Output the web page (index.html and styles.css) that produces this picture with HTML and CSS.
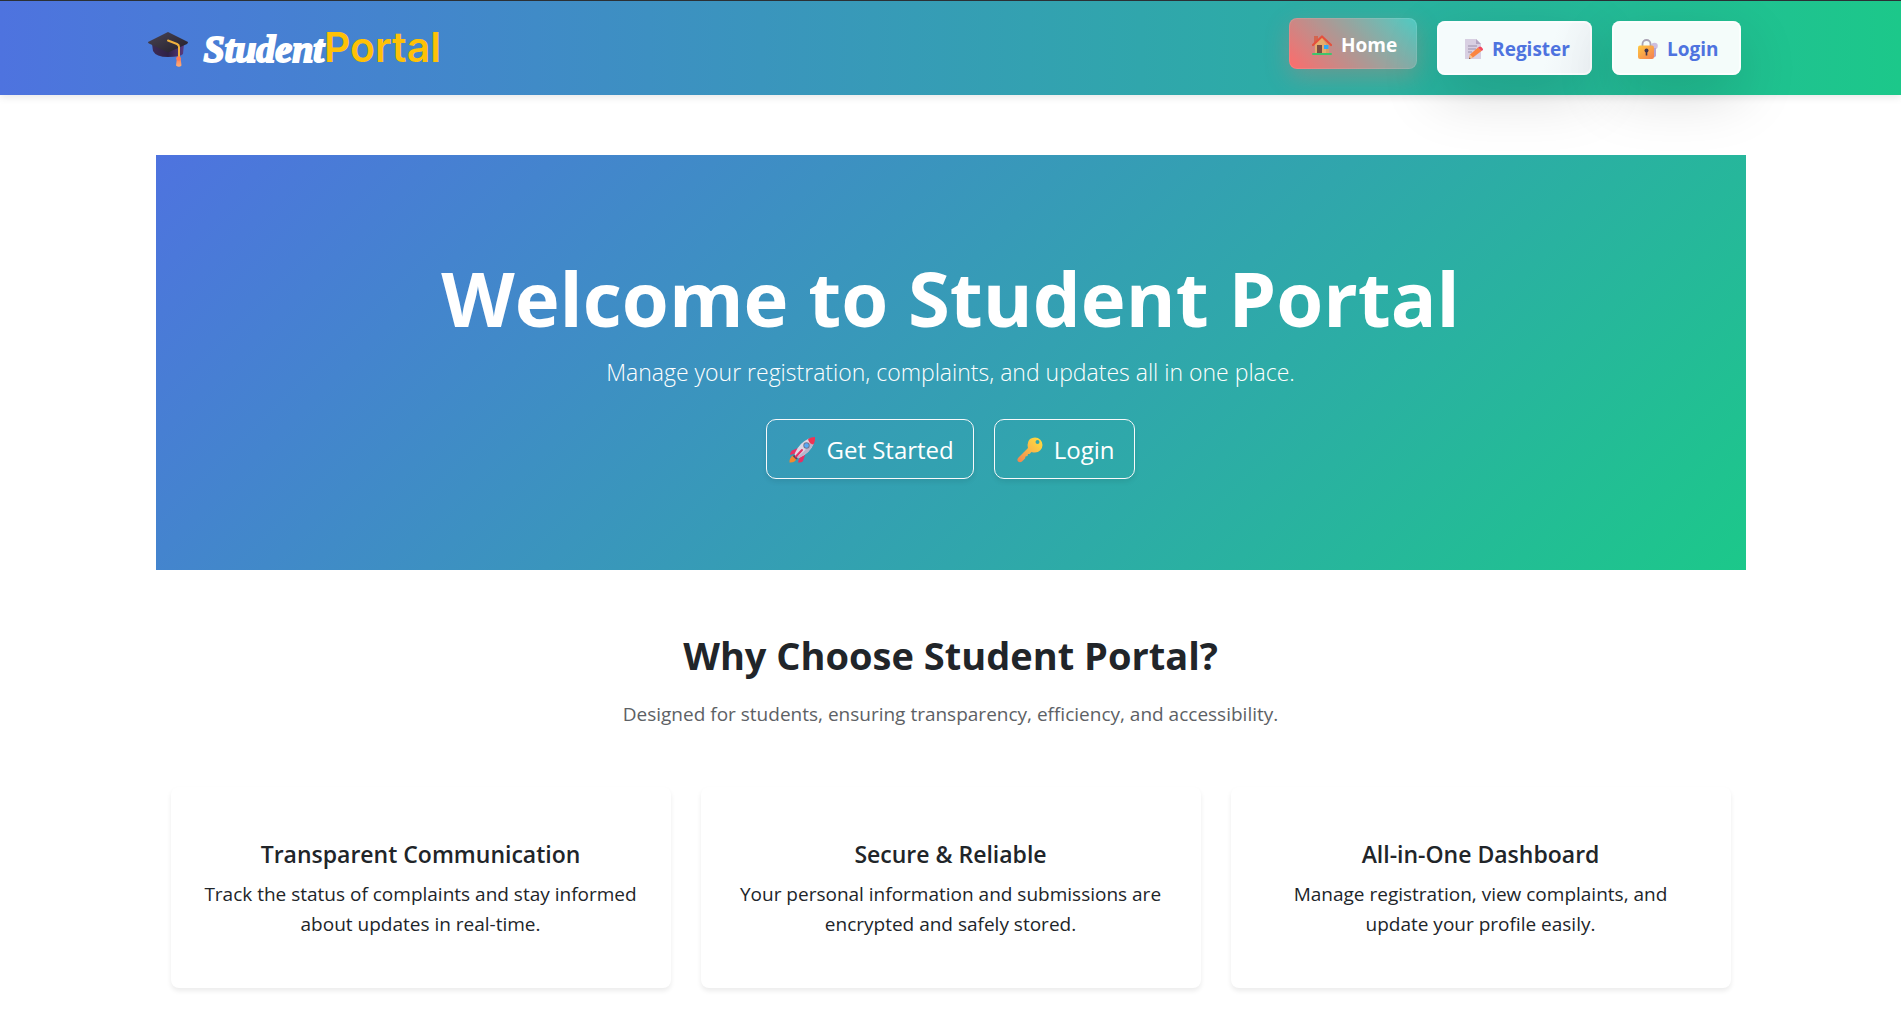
FILE: index.html
```html
<!DOCTYPE html>
<html lang="en">
<head>
  <meta charset="utf-8">
  <meta name="viewport" content="width=device-width, initial-scale=1">
  <title>Student Portal</title>
  <link rel="stylesheet" href="styles.css">
</head>
<body>
  <header class="navbar">
    <div class="navbar-inner">
      <a class="brand" href="#">
        <svg class="brand-icon" viewBox="0 0 40 36" aria-hidden="true">
          <defs>
            <linearGradient id="capTop" x1="0" y1="0" x2="1" y2="1"><stop offset="0" stop-color="#4a4453"/><stop offset="1" stop-color="#231f2b"/></linearGradient>
            <linearGradient id="capBase" x1="0" y1="0" x2="1" y2="0"><stop offset="0" stop-color="#3d2c55"/><stop offset=".5" stop-color="#2f2146"/><stop offset="1" stop-color="#5a3b82"/></linearGradient>
            <linearGradient id="tassel" x1="0" y1="0" x2="0" y2="1"><stop offset="0" stop-color="#ff7a55"/><stop offset="1" stop-color="#ffb079"/></linearGradient>
          </defs>
          <path d="M4 12 L36 12 L35 22 Q33 25 20 25 Q8 25 5 19 Z" fill="url(#capBase)"/>
          <path d="M20 0 L40 10 Q40 11 39 12 L20 20.500 L1 11.500 Q0 11 0 10 Z" fill="url(#capTop)"/>
          <path d="M20 8.500 L29 12 Q31 13 31 15 L31 27" fill="none" stroke="#efb13e" stroke-width="2" stroke-linecap="round" stroke-linejoin="round"/>
          <path d="M29 25.500 h3.500 l1 8 q-2.500 2.500 -5.500 0 Z" fill="url(#tassel)"/>
          <circle cx="30.500" cy="26.500" r="2.300" fill="#ff7a55"/>
        </svg>
        <span class="brand-name"><span class="brand-script">Student</span><span class="brand-plain">Portal</span></span>
      </a>
      <nav class="nav-links" aria-label="Main">
        <a class="nav-button nav-button-active" href="#">
          <svg class="nav-icon" viewBox="0 0 20 20" aria-hidden="true">
            <rect x="2" y="1" width="4" height="7" fill="#d3654f"/>
            <path d="M3 8 L10 2 L17 8 V19 H3 Z" fill="#e6ac6c"/>
            <path d="M10 3 L17 9 V19 H14 V9 Z" fill="#d89c64"/>
            <path d="M1 10 L10 1.500 L19 10" fill="none" stroke="#e5503c" stroke-width="2.200" stroke-linecap="round" stroke-linejoin="round"/>
            <rect x="5" y="10" width="5" height="8" fill="#7b4c43"/>
            <rect x="12" y="10" width="4.500" height="4" fill="#31a8f5"/>
            <rect x="0" y="18" width="20" height="2" rx="1" fill="#3fc46c"/>
          </svg>
          Home
        </a>
        <a class="nav-button nav-button-register" href="#">
          <svg class="nav-icon" viewBox="0 0 20 20" aria-hidden="true">
            <path d="M2 0 H13 L18 5 V20 H2 Z" fill="#d8cfe2"/>
            <path d="M13 0 L18 5 H13 Z" fill="#b3a6c2"/>
            <path d="M5 7 H14 M5 10 H13 M5 13 H9" stroke="#9b90aa" stroke-width="1"/>
            <path d="M7 15.500 L15 8.500 L18.500 12 L10 18.500 L6 20 Z" fill="#fb8440"/>
            <path d="M15 8.500 L17 7.500 Q20 8.500 20 11 L18.500 12 Z" fill="#f3465d"/>
            <path d="M7 15.500 L10 18.500 L6 20 Z" fill="#f5c28c"/>
            <path d="M6.500 18.500 L7.500 19.500 L6 20 Z" fill="#4b3948"/>
          </svg>
          Register
        </a>
        <a class="nav-button" href="#">
          <svg class="nav-icon" viewBox="0 0 20 20" aria-hidden="true">
            <defs><linearGradient id="lockBody" x1="0" y1="0" x2="1" y2="1"><stop offset="0" stop-color="#ffc83f"/><stop offset="1" stop-color="#f47f52"/></linearGradient></defs>
            <circle cx="16.500" cy="7" r="3.300" fill="#cdbfdf"/>
            <path d="M15 9 H18 V17 L16.500 18.500 L15 17 Z" fill="#b6a4cf"/>
            <path d="M4.500 8 V5 a4 4 0 0 1 8 0 V8" fill="none" stroke="#aaa3b4" stroke-width="1.800"/>
            <rect x="0" y="6.500" width="16" height="13.500" rx="2" fill="url(#lockBody)"/>
            <circle cx="8.500" cy="11.500" r="2" fill="#42354c"/>
            <path d="M7.700 12 h1.600 v4.500 h-1.600 Z" fill="#42354c"/>
          </svg>
          Login
        </a>
      </nav>
    </div>
  </header>

  <main class="container">
    <section class="hero">
      <h1 class="hero-title">Welcome to Student Portal</h1>
      <p class="hero-lead">Manage your registration, complaints, and updates all in one place.</p>
      <div class="hero-actions">
        <a class="hero-button" href="#">
          <svg class="hero-icon" viewBox="0 0 26 26" aria-hidden="true">
            <path d="M9 11 L3 13.500 Q1 15 1 18 L8 16 Z" fill="#e72f65"/>
            <path d="M16 18 L14 24 Q13 25.500 9 25.500 L11 18 Z" fill="#e72f65"/>
            <path d="M5.500 18 Q0 20 0.500 25.500 Q6 26 8 21 Z" fill="#f58a2d"/>
            <path d="M5 20 L6 16 Q10 6 20 1.500 L25 6 Q21 16 10 21 L7 22 Z" fill="#dcd7e5"/>
            <path d="M25 6 Q21 16 10 21 L7 22 L6 21 Q17 15 22 4 Z" fill="#bdb3cb"/>
            <path d="M19 2 Q22 0 26 0 Q26.500 4 24.500 7.500 Q20 7 19 2 Z" fill="#ef3354"/>
            <path d="M5 17.500 L9 21.500 L7 22.500 L4 19.500 Z" fill="#57455f"/>
            <path d="M13 13 L7 19.500" stroke="#e72f65" stroke-width="2" stroke-linecap="round"/>
            <circle cx="17.500" cy="8.500" r="3.200" fill="#6f7792"/>
            <circle cx="17.500" cy="8.500" r="2.200" fill="#55a9f6"/>
          </svg>
          Get Started
        </a>
        <a class="hero-button" href="#">
          <svg class="hero-icon" viewBox="0 0 26 26" aria-hidden="true">
            <defs><linearGradient id="key" x1="1" y1="0" x2="0" y2="1"><stop offset="0" stop-color="#ffe03d"/><stop offset=".5" stop-color="#fbb848"/><stop offset="1" stop-color="#f08350"/></linearGradient></defs>
            <path fill="url(#key)" fill-rule="evenodd" d="M18 0.500 A7.500 7.500 0 0 1 18 15.500 Q16 15.500 14.500 15 L12.500 17 L11 17 L10.500 19 L8.500 19.500 L8 21.500 L5 24.500 Q3 26 1 24.500 Q-0.500 22.500 1.500 20.500 L11 11 Q9.500 5 13 2 Q15 0.500 18 0.500 Z M20.500 3 A2 2 0 1 0 20.500 7 A2 2 0 1 0 20.500 3 Z"/>
          </svg>
          Login
        </a>
      </div>
    </section>

    <section class="features">
      <h2 class="features-title">Why Choose Student Portal?</h2>
      <p class="features-lead">Designed for students, ensuring transparency, efficiency, and accessibility.</p>
      <div class="cards">
        <article class="card">
          <h3 class="card-title">Transparent Communication</h3>
          <p class="card-text">Track the status of complaints and stay informed about updates in real-time.</p>
        </article>
        <article class="card">
          <h3 class="card-title">Secure &amp; Reliable</h3>
          <p class="card-text">Your personal information and submissions are encrypted and safely stored.</p>
        </article>
        <article class="card">
          <h3 class="card-title">All-in-One Dashboard</h3>
          <p class="card-text">Manage registration, view complaints, and update your profile easily.</p>
        </article>
      </div>
    </section>
  </main>
</body>
</html>
```
FILE: styles.css
```css
* {
  box-sizing: border-box;
}

body {
  margin: 0;
  background: #fff;
  color: #212529;
  font-family: "Open Sans", "Noto Sans", sans-serif;
  font-size: 19px;
  line-height: 30px;
}

h1, h2, h3, p {
  margin: 0;
}

a {
  color: inherit;
  text-decoration: none;
}

/* Navigation bar */
.navbar {
  border-top: 1px solid #2b3035;
  background: linear-gradient(90deg, #4e73df, #1cc88a);
  box-shadow: 0 2px 8px rgba(0, 0, 0, 0.1);
}

.navbar-inner {
  display: flex;
  align-items: center;
  justify-content: space-between;
  flex-wrap: wrap;
  max-width: 1650px;
  min-height: 94px;
  margin: 0 auto;
  padding: 0 35px 0 22px;
}

.brand {
  display: flex;
  align-items: center;
  gap: 16px;
}

.brand-icon {
  width: 40px;
  height: 36px;
  margin-top: 4px;
}

.brand-name {
  font-size: 38px;
  line-height: 48px;
}

.brand-script {
  color: #fff;
  font-family: "Liberation Serif", serif;
  font-style: italic;
  font-weight: 700;
  -webkit-text-stroke: 2px #fff;
}

.brand-plain {
  color: #ffc107;
  font-family: Inter, sans-serif;
  font-size: 41px;
  font-weight: 600;
}

.nav-links {
  display: flex;
  align-items: center;
  gap: 20px;
}

.nav-button {
  display: flex;
  align-items: center;
  gap: 9px;
  padding: 13px 22px 11px 26px;
  border-radius: 8px;
  background: #f4fcfa;
  box-shadow: inset 0 0 0 2px rgba(255, 255, 255, 0.6), 0 20px 60px rgba(0, 0, 0, 0.15);
  color: #4e73df;
  font-weight: 700;
}

.nav-button-register {
  background: linear-gradient(110deg, #f5fbfc 70%, #edf2f5);
}

.nav-button-active {
  margin-bottom: 9px;
  padding: 11px 19px 8px 22px;
  border: 1px solid rgba(255, 255, 255, 0.1);
  background: linear-gradient(45deg, #ff6b6b, #4ecdc4) border-box;
  box-shadow: 0 8px 25px rgba(255, 107, 107, 0.3);
  color: #fff;
}

.nav-icon {
  width: 20px;
  height: 20px;
}

/* Hero */
.container {
  max-width: 1650px;
  margin: 0 auto;
  padding: 60px 30px 47px;
}

.hero {
  padding: 97px 30px 91px;
  background: linear-gradient(135deg, #4e73df, #1cc88a);
  color: #fff;
  text-align: center;
}

.hero-title {
  font-size: 76px;
  font-weight: 700;
  line-height: 91px;
}

.hero-lead {
  margin: 11px 0 28px;
  font-size: 23px;
  font-weight: 300;
  line-height: 37px;
}

.hero-actions {
  display: flex;
  flex-wrap: wrap;
  justify-content: center;
  gap: 20px;
}

.hero-button {
  display: flex;
  align-items: center;
  gap: 11px;
  padding: 12px 19px 10px 22px;
  border: 1px solid #f8f9fa;
  border-radius: 10px;
  box-shadow: 0 3px 5px rgba(0, 0, 0, 0.08);
  font-size: 24px;
  line-height: 36px;
}

.hero-icon {
  width: 26px;
  height: 26px;
}

/* Features */
.features {
  padding: 62px 15px 0;
  text-align: center;
}

.features-title {
  font-size: 38px;
  font-weight: 700;
  line-height: 46px;
}

.features-lead {
  margin: 21px 0 58px;
  color: #5d6165;
}

.cards {
  display: grid;
  grid-template-columns: repeat(auto-fit, minmax(320px, 1fr));
  gap: 30px;
}

.card {
  padding: 52px 32px 49px;
  border-radius: 8px;
  background: #fff;
  box-shadow: 0 3px 5px rgba(0, 0, 0, 0.08);
}

.card-title {
  margin-bottom: 10px;
  font-size: 23px;
  font-weight: 600;
  line-height: 30px;
}
```
